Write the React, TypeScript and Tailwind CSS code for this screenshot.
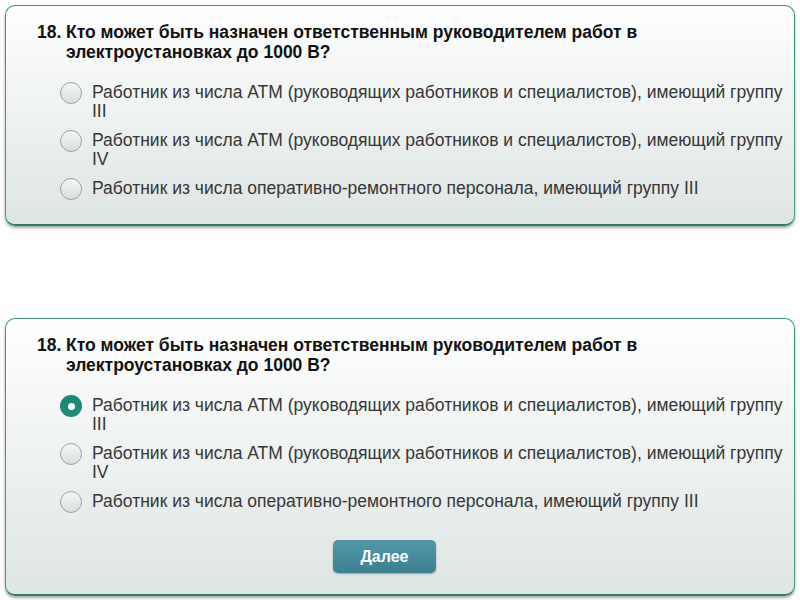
import React from 'react';

const options = [
  'Работник из числа АТМ (руководящих работников и специалистов), имеющий группу III',
  'Работник из числа АТМ (руководящих работников и специалистов), имеющий группу IV',
  'Работник из числа оперативно-ремонтного персонала, имеющий группу III',
];

const Radio: React.FC<{ checked?: boolean }> = ({ checked }) =>
  checked ? (
    <span className="mt-[-1px] flex h-[22px] w-[22px] shrink-0 items-center justify-center rounded-full bg-[#1b8a78]">
      <span className="h-[7px] w-[7px] rounded-full bg-white" />
    </span>
  ) : (
    <span className="mt-[-1px] h-[22px] w-[22px] shrink-0 rounded-full border border-[#9aa3a3] bg-gradient-to-b from-[#f4f5f5] to-[#dcdfdf]" />
  );

const QuestionCard: React.FC<{ selected?: number; withButton?: boolean }> = ({ selected, withButton }) => (
  <div className="rounded-[10px] border border-[#3b9886] border-b-2 border-b-[#2f7f70] bg-gradient-to-b from-[#ffffff] to-[#dde5e3] pl-[31px] pr-1 pt-[16px] shadow-[0_2px_3px_rgba(0,0,0,0.35)]">
    <div className="flex text-[17.5px] font-bold leading-[20px] text-[#111]">
      <span className="w-[29px] shrink-0">18.</span>
      <span className="max-w-[620px]">Кто может быть назначен ответственным руководителем работ в электроустановках до 1000 В?</span>
    </div>
    <div className="mt-[21px] flex flex-col gap-[10px] pl-[23px]">
      {options.map((text, i) => (
        <div key={i} className="flex items-start gap-[10px]">
          <Radio checked={selected === i} />
          <span className="max-w-[700px] text-[17.5px] leading-[19px] text-[#363636]">{text}</span>
        </div>
      ))}
    </div>
    {withButton ? (
      <div className="pb-[21px] pl-[296px] pt-[27px]">
        <button className="h-[33px] w-[103px] rounded-[5px] bg-gradient-to-b from-[#5197aa] to-[#3e7f91] text-[16px] font-bold text-white shadow-[0_1px_2px_rgba(0,0,0,0.3)]">
          Далее
        </button>
      </div>
    ) : (
      <div className="h-[24px]" />
    )}
  </div>
);

const App: React.FC = () => {
  return (
    <div className="h-[600px] w-[800px] bg-white px-[5px] pt-[5px] font-['Liberation_Sans',Arial,sans-serif]">
      <QuestionCard />
      <div className="mt-[92px]">
        <QuestionCard selected={0} withButton />
      </div>
    </div>
  );
};

export default App;
